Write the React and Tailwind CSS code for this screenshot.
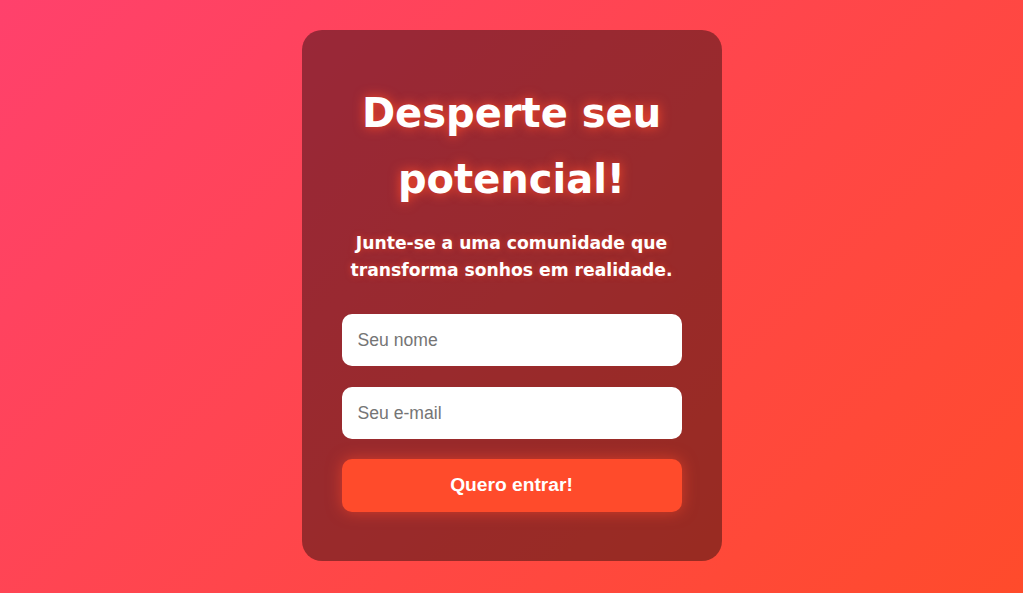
import React from "react";

export default function App() {
  return (
    <div className="min-h-screen w-full flex items-center justify-center pb-[2px] bg-[linear-gradient(135deg,#ff416c,#ff4b2b)]">
      <div className="w-[420px] rounded-[20px] bg-black/40 px-10 pt-[50px] pb-[49px] text-center text-white">
        <h1 className="font-['DejaVu_Sans',sans-serif] font-bold text-[40px] leading-[66px] [text-shadow:0_0_12px_#ff4b2b]">
          Desperte seu potencial!
        </h1>
        <p className="mt-[18px] font-['DejaVu_Sans',sans-serif] font-bold text-[17.2px] leading-[27px] [text-shadow:0_0_6px_rgba(255,75,43,0.6)]">
          Junte-se a uma comunidade que transforma sonhos em realidade.
        </p>
        <form className="mt-[30px] flex flex-col" onSubmit={(e) => e.preventDefault()}>
          <input
            type="text"
            placeholder="Seu nome"
            className="h-[52px] w-full rounded-[10px] bg-white px-4 font-['Liberation_Sans',Arial,sans-serif] text-[17.6px] text-[#333] placeholder:text-[#757575] outline-none"
          />
          <input
            type="email"
            placeholder="Seu e-mail"
            className="mt-[21px] h-[52px] w-full rounded-[10px] bg-white px-4 font-['Liberation_Sans',Arial,sans-serif] text-[17.6px] text-[#333] placeholder:text-[#757575] outline-none"
          />
          <button
            type="submit"
            className="mt-[20px] h-[53px] w-full rounded-[10px] bg-[#ff4b2b] font-['Liberation_Sans',Arial,sans-serif] text-[19.2px] font-bold text-white shadow-[0_0_15px_rgba(255,75,43,0.6)]"
          >
            Quero entrar!
          </button>
        </form>
      </div>
    </div>
  );
}
